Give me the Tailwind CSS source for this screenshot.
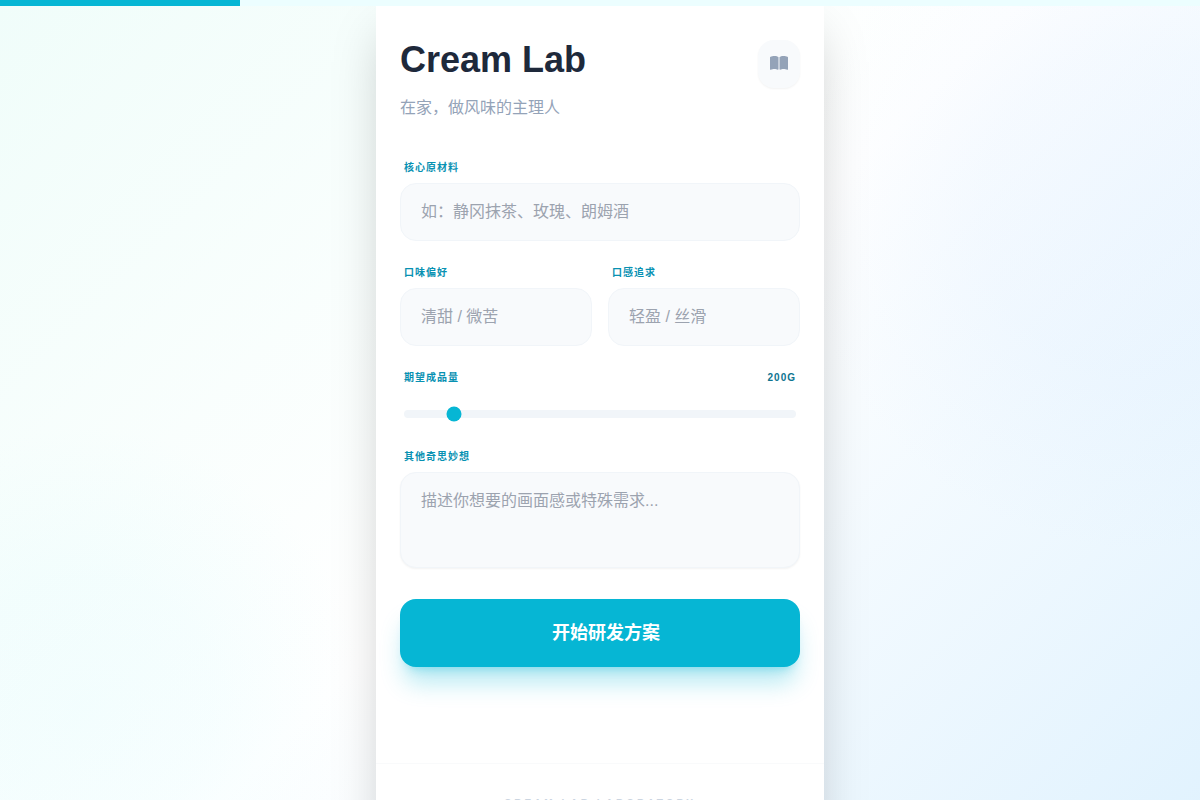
<!DOCTYPE html>
<html lang="zh-CN">
<head>
    <meta charset="UTF-8">
    <meta name="viewport" content="width=device-width, initial-scale=1.0">
    <title>Cream Lab</title>
    <script src="https://cdn.jsdelivr.net/npm/@tailwindcss/browser@4"></script>
</head>
<body class="min-h-screen bg-[radial-gradient(circle_at_95%_25%,rgba(191,219,254,0.13)_0,rgba(191,219,254,0.11)_160px,transparent_340px),radial-gradient(circle_at_7%_84%,rgba(207,250,254,0.2)_0,rgba(207,250,254,0.16)_130px,transparent_280px),linear-gradient(135deg,#f0fdfa_0%,#ffffff_50%,#e0f2fe_100%)] font-['Liberation_Sans','Noto_Sans_CJK_SC',sans-serif] text-[#1e293b]">
    <!-- Progress bar -->
    <div class="fixed top-0 left-0 z-10 h-1.5 w-full bg-[#ecfeff]">
        <div class="h-full w-1/5 bg-[#06b6d4]"></div>
    </div>

    <div class="mx-auto flex min-h-screen max-w-md flex-col bg-white shadow-2xl">
        <main class="px-6 pt-10 pb-24">
            <!-- Header -->
            <header class="mb-10 flex items-start justify-between">
                <div>
                    <h1 class="mb-4 text-4xl font-bold">Cream Lab</h1>
                    <p class="text-base text-[#94a3b8]">在家，做风味的主理人</p>
                </div>
                <button type="button" aria-label="配方本" class="flex h-12 items-center rounded-2xl bg-[#f8fafc] px-3 pb-0.5 text-[#94a3b8] shadow-xs">
                    <svg class="h-4 w-[18px]" viewBox="0 0 576 512" fill="currentColor">
                        <path d="M249.6 471.5c10.8 3.8 22.4-4.1 22.4-15.5V78.6c0-4.2-1.6-8.4-5-11C247.4 52 202.4 32 144 32C93.5 32 46.3 45.3 18.1 56.1C6.8 60.5 0 71.7 0 83.8V454.1c0 11.9 12.8 20.2 24.1 16.5C55.6 460.1 105.5 448 144 448c33.9 0 79 14 105.6 23.5zm76.800 0C353 462 398.100 448 432 448c38.500 0 88.400 12.100 119.900 22.600c11.300 3.800 24.100-4.600 24.100-16.500V83.800c0-12.100-6.800-23.300-18.100-27.600C529.700 45.300 482.500 32 432 32c-58.400 0-103.400 20-123 35.600c-3.300 2.600-5 6.800-5 11V456c0 11.400 11.700 19.300 22.400 15.500z" />
                    </svg>
                </button>
            </header>

            <!-- Recipe Form -->
            <form id="recipe-form" class="space-y-6">
                <div>
                    <label for="ingredient" class="mb-2 block px-1 text-[10px]/[15px] font-bold tracking-widest text-[#0891b2]">核心原材料</label>
                    <input type="text" id="ingredient" placeholder="如：静冈抹茶、玫瑰、朗姆酒"
                        class="block w-full rounded-2xl border border-[#f1f5f9] bg-[#f8fafc] px-5 py-4 placeholder:text-[#9ca3af]">
                </div>

                <div class="grid grid-cols-2 gap-4">
                    <div>
                        <label for="taste" class="mb-2 block px-1 text-[10px]/[15px] font-bold tracking-widest text-[#0891b2]">口味偏好</label>
                        <input type="text" id="taste" placeholder="清甜 / 微苦"
                            class="block w-full rounded-2xl border border-[#f1f5f9] bg-[#f8fafc] px-5 py-4 placeholder:text-[#9ca3af]">
                    </div>
                    <div>
                        <label for="texture" class="mb-2 block px-1 text-[10px]/[15px] font-bold tracking-widest text-[#0891b2]">口感追求</label>
                        <input type="text" id="texture" placeholder="轻盈 / 丝滑"
                            class="block w-full rounded-2xl border border-[#f1f5f9] bg-[#f8fafc] px-5 py-4 placeholder:text-[#9ca3af]">
                    </div>
                </div>

                <div class="px-1">
                    <div class="mb-4 flex justify-between text-[10px]/[15px] font-bold tracking-widest text-[#0891b2]">
                        <label for="amount">期望成品量</label>
                        <output id="amount-value" for="amount" class="text-[#0e7490]">200G</output>
                    </div>
                    <input type="range" id="amount" min="100" max="1000" step="50" value="200"
                        class="h-2 w-full cursor-pointer appearance-none rounded-lg bg-[#f1f5f9] accent-[#06b6d4]">
                </div>

                <div class="pb-[7px]">
                    <label for="notes" class="mb-2 block px-1 text-[10px]/[15px] font-bold tracking-widest text-[#0891b2]">其他奇思妙想</label>
                    <textarea id="notes" placeholder="描述你想要的画面感或特殊需求..."
                        class="block h-24 w-full resize-none rounded-2xl border border-[#f1f5f9] bg-[#f8fafc] px-5 py-4 shadow-xs placeholder:text-[#9ca3af]"></textarea>
                </div>

                <button type="submit"
                    class="w-full rounded-2xl bg-[#06b6d4] py-5 pl-3 text-lg font-bold text-white shadow-xl shadow-[#06b6d4]/30">
                    开始研发方案
                </button>
            </form>
        </main>

        <footer class="border-t border-[#f9fafb] py-8 text-center">
            <p class="text-[10px]/[15px] font-bold tracking-[0.3em] text-[#cbd5e1]">CREAM LAB LABORATORY</p>
        </footer>
    </div>

    <script>
        const amount = document.getElementById('amount');
        const amountValue = document.getElementById('amount-value');

        // Keep the label in step with the slider
        amount.addEventListener('input', () => {
            amountValue.textContent = `${amount.value}G`;
        });

        document.getElementById('recipe-form').addEventListener('submit', (e) => {
            e.preventDefault();
        });
    </script>
</body>
</html>
